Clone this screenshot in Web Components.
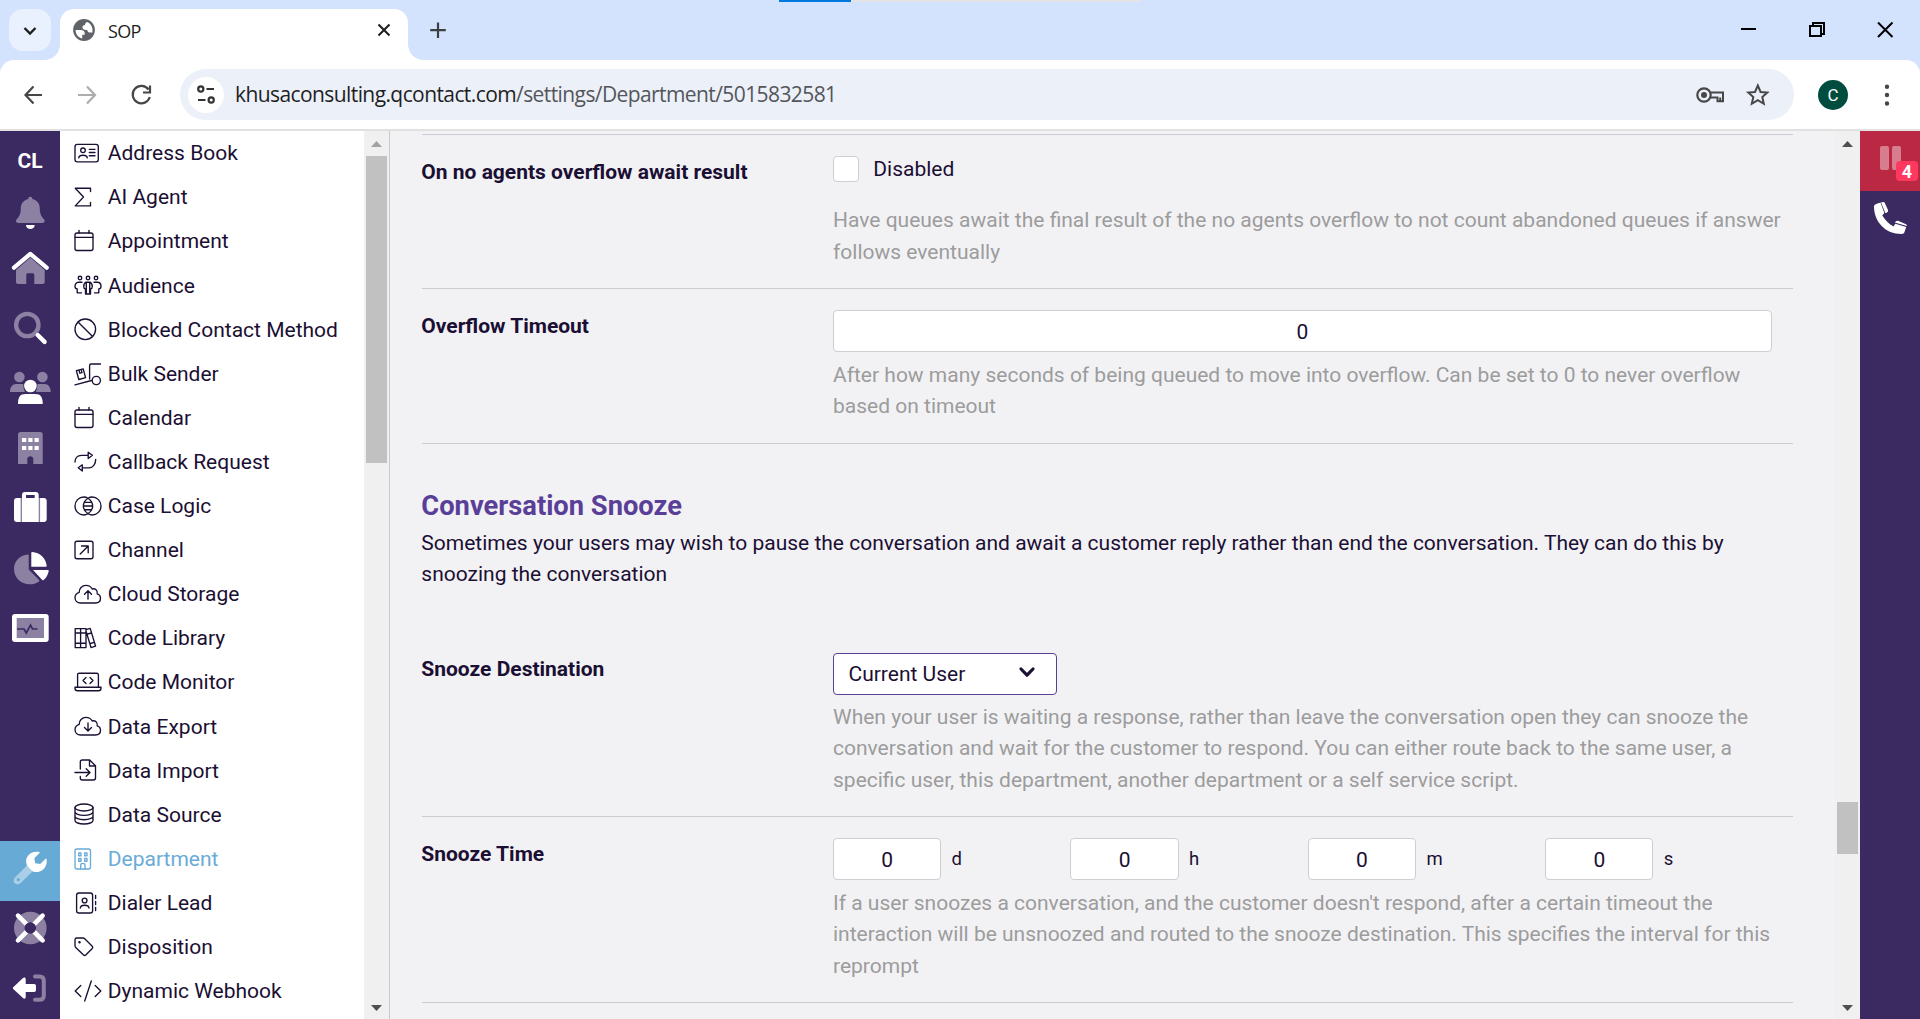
<!DOCTYPE html>
<html lang="en">
<head>
<meta charset="utf-8">
<title>SOP</title>
<style>
html,body{margin:0;height:100%;overflow:hidden}
body{font:21px/31.5px Roboto,sans-serif;color:#1b0f33}
</style>
</head>
<body>
<app-window></app-window>
<script>
const define=(name,html)=>customElements.define(name,class extends HTMLElement{
  constructor(){
    super();
    const t=document.createElement('template');
    t.innerHTML=typeof html==='function'?html(this):html;
    this.attachShadow({mode:'open'}).append(t.content.cloneNode(true));
  }
});

/* thin outline icons, drawn on a 28 x 24 grid */
const cal='<rect x="1" y="4" width="18" height="17.5" rx="2"/><path d="M1 8.3H19M5 4V1.3M15 4V1.3"/>';
const cloud='<path d="M6.5 21H21.500C24.500 21 26.500 19 26.500 16.300C26.500 14 25 12.300 23.200 11.800C24 8.500 21 6 18.200 7C16.800 4.600 14.500 3.400 12 3.400C8 3.400 5 6.600 5.200 10.300C2.600 11.200 1 13 1 15.600C1 18.700 3.400 21 6.500 21Z"/>';
const outline={
 address:'<rect x="1" y="3.300" width="23.300" height="17.600" rx="2.300"/><circle cx="9" cy="9.300" r="2.300"/><path d="M4.700 16.800C5 14.700 6.500 14.200 9 14.200S13 14.700 13.300 16.800M15.300 8.300H21M15.300 11.500H21M15.300 14.700H21"/>',
 sigma:'<path d="M16.500 6.500V3.200H1.300L9.500 12L1.300 20.900H16.500V17.500"/>',
 calendar:cal,
 audience:'<circle cx="6" cy="5" r="1.800"/><circle cx="14" cy="5" r="1.800"/><circle cx="22" cy="5" r="1.800"/><path d="M8 9.200H4.500C2 9.200 1 11.500 1 13.500C1 15 2 15.800 3.200 16V19.800H7.500M20 9.200H23.500C26 9.200 27 11.500 27 13.500C27 15 26 15.800 24.800 16V19.800H20.500M12 9.200H16C17.600 10 18.300 12 18.300 13.500C18.300 15.200 17.500 15.800 16.500 16V21H11.500V16C10.500 15.800 9.700 15.200 9.700 13.500C9.700 12 10.400 10 12 9.200ZM12.300 10V20M15.700 10V20"/>',
 blocked:'<circle cx="11.300" cy="12.300" r="10.300"/><path d="M4 5L18.600 19.600"/>',
 bulk:'<path d="M1 22.800L17.500 18.500M26.500 2H17.200C16 2 15.600 2.600 15.600 3.800V17"/><circle cx="22.300" cy="18.500" r="4.100"/><path d="M2.400 8.700L9.200 6.900L11.600 15.700L4.800 17.500ZM5 8.200L5.800 11.200L8 10.600L7.200 7.600"/>',
 callback:'<path d="M1 12C1 8 3.500 5.300 7.500 5.300H14M14.200 2.200L18.400 5.300L14.200 8.500ZM21.700 9.500C21.700 14 19 17.800 15 17.800H8.500M8.300 14.800L4.200 17.800L8.300 21Z"/>',
 logic:'<path d="M14 4.200C12.700 3.400 11.300 3 9.800 3C4.900 3 1 7 1 12S4.900 21 9.800 21C11.300 21 12.700 20.600 14 19.800C15.300 20.600 16.700 21 18.200 21C23 21 27 17 27 12S23 3 18.200 3C16.700 3 15.300 3.400 14 4.200C7.800 8.500 7.800 15.500 14 19.800C20.200 15.500 20.200 8.500 14 4.200ZM10.500 8.300H17.500M9.500 12H18.500M10.500 15.700H17.500"/>',
 channel:'<rect x="1" y="3.200" width="18" height="17.500" rx="2"/><path d="M6.200 16L14 8.200M7.500 8H14.200V14.800"/>',
 cloudup:cloud+'<path d="M14 17V9M10.500 12.300L14 8.800L17.500 12.300"/>',
 clouddown:cloud+'<path d="M14 9V16.700M10.500 13.500L14 17L17.500 13.500"/>',
 library:'<path d="M1.200 2.600H12V21.600H1.200ZM6.600 2.600V21.600M1.200 7H12M1.200 17.200H12M12 3.600L16.200 2.400L21.600 20.200L17 21.600L12 5M13.500 8L17.500 7M16.200 17.500L20.300 16.300"/>',
 monitor:'<path d="M3.600 17V4.800C3.600 3.700 4.200 3.200 5.300 3.200H22.700C23.800 3.200 24.400 3.700 24.400 4.800V17M1 17.200H27V18.200C27 19.800 26 20.700 24.500 20.700H3.500C2 20.700 1 19.800 1 18.200ZM12 7.500L9 10.500L12 13.500M16 7.500L19 10.500L16 13.500"/>',
 import:'<path d="M6.300 11V4C6.300 2.700 7 2 8.300 2H15.700L21.500 7.800V20C21.500 21.300 20.800 22 19.500 22H8.300C7 22 6.300 21.300 6.300 20V18.500M15.500 2V8H21.500M1 14.500H16M12.200 10.700L16 14.500L12.200 18.300"/>',
 source:'<ellipse cx="10" cy="5.500" rx="9" ry="3.500"/><path d="M1 5.500V18.500C1 20.500 5 22 10 22S19 20.500 19 18.500V5.500M1 9.800C1 11.800 5 13.300 10 13.300S19 11.800 19 9.800M1 14.200C1 16.200 5 17.700 10 17.700S19 16.200 19 14.200"/>',
 department:'<rect x="1" y="2" width="15.500" height="20" rx="2"/><path d="M4.700 6H7V8.700H4.700ZM10.700 6H13V8.700H10.700ZM4.700 11.500H7V14.200H4.700ZM10.700 11.500H13V14.200H10.700ZM6.700 22V18.200C6.700 15.800 11 15.800 11 18.200V22"/>',
 dialer:'<rect x="2.600" y="2" width="16" height="20" rx="2.300"/><circle cx="10.600" cy="9.500" r="2.400"/><path d="M6.300 17C6.500 14.600 8 14.200 10.600 14.200S14.800 14.600 15 17M21.600 4.300V7.500M21.600 10.300V13.500M21.600 16.300V19.500"/>',
 tag:'<path d="M1 4.800V10.500C1 11.500 1.300 12 2 12.700L9.300 19.700C10.300 20.700 11 20.700 12 19.700L18 13.700C19 12.700 19 12 18 11L11 4C10.300 3.300 9.800 3 8.800 3H2.800C1.500 3 1 3.500 1 4.800Z"/><circle cx="5.500" cy="7.300" r=".6"/>',
 code:'<path d="M6.800 6.500L1.200 12L6.800 17.500M21.200 6.500L26.800 12L21.200 17.500M17.300 2L10.700 22"/>'
};
define('menu-item',el=>`<style>
:host{display:flex;align-items:center;height:44.1px;padding-left:14px;white-space:nowrap;color:#1b0f33}
:host([active]){color:#6aabd8}
span{padding-top:2px}
svg{width:28px;height:24px;flex:none;margin-right:5.800px;fill:none;stroke:currentColor;stroke-width:1.35;stroke-linejoin:round;stroke-linecap:round}
</style><svg viewBox="0 0 28 24">${outline[el.getAttribute('icon')]}</svg><span><slot></slot></span>`);

/* two-tone rail icons on a 48 x 36 grid; class d is the dimmed layer */
const rail={
 bell:'<path class="d" d="M24.300 1.700C25.600 1.700 26.300 2.500 26.300 4C31 5 33.800 8.500 33.800 13.500C33.800 19 35.500 21.500 38 24.300C39.300 26 38.500 28 36.500 28H12.200C10.200 28 9.300 26 10.700 24.300C13.200 21.500 14.800 19 14.800 13.500C14.800 8.500 17.700 5 22.300 4C22.300 2.500 23 1.700 24.300 1.700Z"/><path d="M20 30H28.700C28.700 35.300 20 35.300 20 30Z"/>',
 home:'<path class="d" d="M24.300 7.500L38.700 20V32C38.700 33.300 38 34 36.700 34H28.300V25C28.300 23.800 27.600 23.200 26.500 23.200H22C20.800 23.200 20.300 23.800 20.300 25V34H12C10.700 34 10 33.300 10 32V20Z"/><path class="l" stroke-width="4.200" d="M8 17.700L24.300 3.900L40.700 17.700"/>',
 search:'<circle cx="21.300" cy="15" r="11.200" fill="none" stroke="#8c80a3" stroke-width="4.300"/><path class="l" stroke-width="4.400" d="M31.700 25L38.600 31.900"/>',
 users:'<circle class="d" cx="13.400" cy="7" r="5.300"/><circle class="d" cx="36.400" cy="7" r="5.300"/><path class="d" d="M4 22C4 17 6.500 14 10 14H16C17 14 17.500 14.300 17.500 16C17.500 18.500 18 20 19 22ZM44.700 22C44.700 17 42.200 14 38.700 14H32.700C31.700 14 31.200 14.300 31.200 16C31.200 18.500 30.700 20 29.700 22Z"/><circle cx="24.400" cy="16" r="6.300"/><path d="M12 34C12 27 14 24 19.500 24H29.200C34.700 24 36.700 27 36.700 34Z"/>',
 building:'<path class="d" d="M14.500 2H34.200C35.800 2 36.700 2.900 36.700 4.500V34H27.300V29C27.300 25.200 21.300 25.200 21.300 29V34H12V4.500C12 2.900 12.900 2 14.500 2Z"/><path d="M16 8H20.300V12H16ZM22.300 8H26.500V12H22.300ZM28.500 8H32.700V12H28.500ZM16 16H20.300V20H16ZM22.300 16H26.500V20H22.300ZM28.500 16H32.700V20H28.500Z"/>',
 suitcase:'<path class="d" d="M14 8H35V32H14Z"/><path d="M8 11C8 9 9 8 11 8H14.600V32H11C9 32 8 31 8 29ZM40.700 11C40.700 9 39.700 8 37.700 8H34.100V32H37.700C39.700 32 40.700 31 40.700 29Z"/><path fill-rule="evenodd" d="M16 32V5C16 3 17 2 19 2H29.700C31.700 2 32.700 3 32.700 5V32ZM20 5V8H28.700V5Z"/>',
 pie:'<path class="d" d="M22 4.500C22.600 4.400 22.700 4.800 22.700 5.300V19.500L33 30C33.500 30.500 33.500 31 33 31.400C23 38.500 8 32 8 19C8 11 14 5 22 4.500Z"/><path d="M25.300 2.800C25.300 2.200 25.600 2 26.200 2C34 2.400 40 8 40.700 16C40.700 16.500 40.400 16.800 39.900 16.800H25.300ZM27 20H42C42.600 20 42.800 20.300 42.700 20.900C42.200 24.500 40.300 27.600 37.600 30C37.200 30.500 36.700 30.400 36.300 30Z"/>',
 activity:'<rect x="6" y="4" width="36.700" height="28" rx="3"/><rect x="10.700" y="8" width="27.300" height="20" fill="#8c80a3"/><path d="M11 19H18L20.300 23L24.500 15L26.500 19H31.500" fill="none" stroke="#3b2a61" stroke-width="1.700"/>',
 wrench:'<path fill="#a9cfe8" fill-rule="evenodd" d="M21.500 15L9.400 27.100C7 29.500 7.300 32 8.800 33.200C10.500 34.800 13 34.800 15.200 32.600L27.500 20.500ZM12.300 28A1.600 1.600 0 1 1 12.200 28Z"/><path d="M33.500 3L28.300 8.200L29.200 13.200L34.200 14.100L39.400 8.900C40 8.400 40.400 8.600 40.600 9.300C41.300 14 39.400 18 36.200 20.300C33.500 22.300 29.700 22.700 26.500 21.200L21.400 16C19 11.500 20.200 6.800 23.700 4C26.300 1.900 29.700 1.200 33.200 1.900C33.900 2.100 34 2.500 33.500 3Z"/>',
 life:'<circle class="d" cx="24.300" cy="18" r="16.300"/><path class="l" stroke-width="4.600" stroke-linecap="butt" d="M12 5.700L36.600 30.300M36.600 5.700L12 30.300"/><circle cx="24.300" cy="18" r="5.800" fill="#3b2a61"/>',
 logout:'<path fill="none" stroke="#8c80a3" stroke-width="4" stroke-linecap="round" d="M29 6.500H33.500C36.500 6.500 37.800 8 37.800 10.500V25.700C37.800 28.300 36.500 29.700 33.500 29.700H29"/><path d="M7.500 16.900L17 8C18.300 6.800 19.700 7.500 19.700 9V14H28C29.300 14 30 14.700 30 16V20C30 21.300 29.300 22 28 22H19.700V27C19.700 28.600 18.300 29.300 17 28L7.500 19.200C6.700 18.400 6.700 17.600 7.500 16.900Z"/>'
};
define('rail-button',el=>`<style>
:host{display:flex;box-sizing:border-box;flex:none;height:60px;padding:9px 0 0 6px}
:host([active]){background:#68aad6}
:host([low]){padding-top:14px}
svg{width:48px;height:36px;fill:#fff}.d{fill:#8c80a3}.l{fill:none;stroke:#fff;stroke-linecap:round;stroke-linejoin:round}
</style><svg viewBox="0 0 48 36">${rail[el.getAttribute('icon')]}</svg>`);

define('side-rail',`<style>
:host{display:flex;flex-direction:column;width:60px;background:#3b2a61;flex:none;overflow:hidden}
b{height:50px;flex:none;line-height:60px;text-align:center;color:#fff;font-size:21px;font-weight:700}
div{flex:none;height:180px}
</style><b>CL</b>${['bell" low="','home','search','users','building','suitcase','pie','activity'].map(i=>`<rail-button icon="${i}"></rail-button>`).join('')}
<div></div><rail-button icon="wrench" active></rail-button><rail-button icon="life"></rail-button><rail-button icon="logout"></rail-button>`);

define('scroll-track',el=>`<style>
:host{display:flex;flex-direction:column;align-items:center;width:25px;flex:none;background:#f0f0f0;box-sizing:border-box;padding:10px 0 8px}
i{width:21px;height:${el.getAttribute('size')}px;margin-top:${el.getAttribute('offset')}px;background:#c1c1c1;margin-bottom:auto}
svg{width:11px;height:6px;flex:none}
</style><svg viewBox="0 0 11 6"><path d="M0 6L5.500 0L11 6Z" fill="${el.getAttribute('up')}"/></svg><i></i><svg viewBox="0 0 11 6"><path d="M0 0H11L5.500 6Z" fill="#505050"/></svg>`);

const items=[['address','Address Book'],['sigma','AI Agent'],['calendar','Appointment'],['audience','Audience'],['blocked','Blocked Contact Method'],['bulk','Bulk Sender'],['calendar','Calendar'],['callback','Callback Request'],['logic','Case Logic'],['channel','Channel'],['cloudup','Cloud Storage'],['library','Code Library'],['monitor','Code Monitor'],['clouddown','Data Export'],['import','Data Import'],['source','Data Source'],['department','Department'],['dialer','Dialer Lead'],['tag','Disposition'],['code','Dynamic Webhook']];
define('settings-menu',`<style>
:host{display:flex;width:329px;flex:none;background:#fff;border-right:1px solid #c9c9cf}
nav{width:304px;overflow:hidden}
</style><nav>${items.map(([i,t])=>`<menu-item icon="${i}"${i==='department'?' active':''}>${t}</menu-item>`).join('')}</nav>
<scroll-track up="#a3a3a3" offset="9" size="307"></scroll-track>`);

define('setting-row',`<style>
:host{display:flex;align-items:flex-start;border-bottom:1px solid #cbccd1;padding:21px 0 var(--end,20px);white-space:nowrap}
b{width:411.700px;margin-left:-.7px;flex:none;font-weight:700;line-height:31.500px;padding-top:1px}
section{display:flex;flex-direction:column;align-items:flex-start;width:939px}
p{margin:var(--gap,8px) 0 0;color:#9c9c9c}
:host([toggle]) p{margin-top:23px}
</style><b><slot name="label"></slot></b><section><slot></slot><p><slot name="help"></slot></p></section>`);

define('text-box',`<style>
:host{display:block;box-sizing:border-box;width:100%;height:42px;border:1px solid #cdced3;border-radius:4px;background:#fff;text-align:center;line-height:42px}
</style><slot></slot>`);
define('check-box',`<style>
:host{display:flex;align-items:center;height:26px;line-height:28px}
i{width:24px;height:24px;border:1px solid #cdced3;border-radius:4px;background:#fff;margin-right:14.300px}
</style><i></i><slot></slot>`);
define('select-box',`<style>
:host{display:flex;box-sizing:border-box;align-items:center;justify-content:space-between;width:224px;height:42px;border:1px solid #5a3f98;border-radius:4px;background:#fff;padding:1px 20px 0 14.500px}
svg{width:18px;height:13px;margin-top:-3px}
</style><slot></slot><svg viewBox="0 0 18 13"><path d="M3 3L9 9.200L15 3" fill="none" stroke="#1b0f33" stroke-width="3.200" stroke-linecap="round" stroke-linejoin="round"/></svg>`);
define('duration-input',`<style>
:host{display:flex}
div{display:flex;align-items:center;width:237.400px;gap:10.300px;font-size:18.500px}
text-box{width:108.300px;font-size:21px}
span{padding-top:1px}
</style>${['d','h','m','s'].map(u=>`<div><text-box>0</text-box><span>${u}</span></div>`).join('')}`);

define('settings-page',`<style>
:host{display:flex;flex:1;background:#f2f2f5}
main{flex:1;padding:3px 42px 0 32px;overflow:hidden}
hr{height:1px;border:0;margin:0;background:#cbccd1}
h2{margin:43px 0 0 -.7px;font-size:27.300px;line-height:38px;color:#5a3f98;font-weight:700}
main>p{margin:2.800px 0 41.200px -.7px;white-space:nowrap}
</style><main><hr>
<setting-row toggle><span slot="label">On no agents overflow await result</span><check-box>Disabled</check-box><span slot="help">Have queues await the final result of the no agents overflow to not count abandoned queues if answer<br>follows eventually</span></setting-row>
<setting-row style="--gap:7.8px;--end:20.2px"><span slot="label">Overflow Timeout</span><text-box>0</text-box><span slot="help">After how many seconds of being queued to move into overflow. Can be set to 0 to never overflow<br>based on timeout</span></setting-row>
<h2>Conversation Snooze</h2>
<p>Sometimes your users may wish to pause the conversation and await a customer reply rather than end the conversation. They can do this by<br>snoozing the conversation</p>
<setting-row style="--gap:6.8px;--end:19.7px"><span slot="label">Snooze Destination</span><select-box>Current User</select-box><span slot="help">When your user is waiting a response, rather than leave the conversation open they can snooze the<br>conversation and wait for the customer to respond. You can either route back to the same user, a<br>specific user, this department, another department or a self service script.</span></setting-row>
<setting-row style="--gap:7.8px;--end:19.7px"><span slot="label">Snooze Time</span><duration-input></duration-input><span slot="help">If a user snoozes a conversation, and the customer doesn't respond, after a certain timeout the<br>interaction will be unsnoozed and routed to the snooze destination. This specifies the interval for this<br>reprompt</span></setting-row>
</main><scroll-track up="#505050" offset="655" size="52"></scroll-track>`);

define('call-rail',`<style>
:host{display:flex;flex-direction:column;width:60px;flex:none;background:#3b2a61}
div{position:relative;height:60px;background:#bb2843}
svg{display:block}
b{position:absolute;left:36px;top:30px;width:22px;height:20px;border-radius:4px;background:#ff3860;color:#fff;font-size:18px;line-height:21px;text-align:center}
</style><div><svg width="60" height="60"><path d="M20 17Q20 15 22 15H27Q29 15 29 17V37Q29 39 27 39H22Q20 39 20 37ZM32 17Q32 15 34 15H39Q41 15 41 17V37Q41 39 39 39H34Q32 39 32 37Z" fill="#d67e8e"/></svg><b>4</b></div>
<svg width="60" height="60" fill="#fff"><path d="M20.500 11.500C17 12.500 14 13.500 14 15.500C14 31 25.500 43 41.500 43C43.700 43 44.500 42 45 39.500L46.200 36L35.300 32.700L33.500 35.500C29 33 25.500 29.500 22.300 24.500L24.300 22Z"/><path d="M21 11.400L23 11C24 10.900 24.500 11.200 24.800 12L28 19C28.300 20 28 20.500 27.300 21.200L25.400 22.300ZM34.800 31.500L36 30.200C36.600 29.600 37.200 29.500 38 29.800L45.500 33C46.700 33.500 47 34 46.800 34.900Z"/></svg>`);

define('tab-strip',`<style>
:host{display:flex;height:60px;background:#d3e2fd;position:relative;font-family:"Open Sans",sans-serif}
.list{width:42px;height:42px;margin:9px 9px 0 9px;background:#e9f0fe;border-radius:14px}
.tab{display:flex;align-items:center;box-sizing:border-box;width:348px;height:51px;margin-top:9px;padding:0 17px 9px 13px;border-radius:14px 14px 0 0;background:#fff;position:relative;font-size:18px;color:#1f1f1f}
.tab::before,.tab::after{content:"";position:absolute;bottom:0;width:15px;height:15px}
.tab::before{left:-15px;background:radial-gradient(circle at 0 0,transparent 14.500px,#fff 15px)}
.tab::after{right:-15px;background:radial-gradient(circle at 100% 0,transparent 14.500px,#fff 15px)}
.tab span{flex:1;margin-left:13px;letter-spacing:-.7px;padding-top:4px}
.plus{margin:20px 0 0 20px}
.win{margin:14px 26px 0 auto}
.load{position:absolute;left:779px;top:0;width:362px;height:2px;background:linear-gradient(90deg,#0078dd 72px,#e4e4e6 72px)}
svg{display:block;fill:none;stroke:#1f1f1f}
</style><div class="list"><svg width="42" height="42"><path d="M15.500 19L21 24.500L26.500 19" stroke-width="2.400"/></svg></div>
<div class="tab"><svg width="22" height="22" viewBox="0 0 22 22"><circle cx="11" cy="11" r="10.900" fill="#5f6368" stroke="none"/><path d="M2.600 11H7.500C10 11 11.700 12.300 11.700 14V15.700H9.200V19.400C5 18.500 2.500 15 2.600 11ZM14 3C17.500 4.300 19.500 7.500 19.500 11V13.500H16.500C15 13.500 14.500 12.300 14.300 11C12 11 9.500 10.500 9.500 8.500C9.500 6.600 10.500 6.100 12 6C12 4.500 12.700 3.500 14 3Z" fill="#fff" stroke="none"/></svg><span>SOP</span><svg width="14" height="14"><path d="M1.500 1.500L12.500 12.500M12.500 1.500L1.500 12.500" stroke-width="2.100"/></svg></div>
<svg class="plus" width="20" height="20"><path d="M10 2.500V18M2.200 10.200H17.800" stroke-width="2.200" stroke="#3c4043"/></svg>
<svg class="win" width="154" height="32"><path d="M1 15H16" stroke="#000" stroke-width="2"/><path d="M70 12H81V22H70ZM73 11.500V9H84V20H81.500" stroke="#000" stroke-width="2"/><path d="M138 8.500L152.500 23M152.500 8.500L138 23" stroke="#000" stroke-width="2"/></svg><div class="load"></div>`);

define('address-bar',`<style>
:host{display:flex;height:69px;background:#d3e2fd;border-bottom:2px solid #e1e1e1}
header{display:flex;flex:1;align-items:center;background:#fff;border-radius:14px 14px 0 0;padding:0 24px 0 22px}
svg{display:block;flex:none;fill:none;stroke:#474747;stroke-width:2.200}
.omni{display:flex;align-items:center;box-sizing:border-box;width:1614px;height:51px;margin-left:26px;border-radius:26px;background:#ecf0f9;padding:0 23px 0 8px;font:21px "Open Sans",sans-serif;color:#1f1f1f}
.site{width:36px;height:36px;border-radius:50%;background:#fff;margin-right:11px}
.omni span{flex:1;white-space:nowrap;letter-spacing:-.59px;padding-bottom:2px}em{font-style:normal;color:#54565a}
.me{width:30px;height:30px;border-radius:50%;background:#004d40;color:#fff;font:17px/30px Roboto,sans-serif;text-align:center;margin:0 36px 0 24px}
</style><header><svg width="132" height="24"><path d="M20 12H4M11.500 3.500L3.500 12L11.500 20.500"/><path d="M56 12H72.500M65 3.500L73 12L65 20.500" stroke="#adadad"/><path d="M126.500 6.500A8.700 8.700 0 1 0 127.800 14M128 2.500V9.500H121"/></svg>
<div class="omni"><div class="site"><svg width="36" height="36"><path d="M18.500 12H26M10 23H17.500" stroke="#333"/><circle cx="12.800" cy="12" r="2.600" stroke="#333"/><circle cx="23.200" cy="23" r="2.600" stroke="#333"/></svg></div>
<span>khusaconsulting.qcontact.com<em>/settings/Department/5015832581</em></span>
<svg width="76" height="26"><circle cx="9" cy="13" r="6.700"/><circle cx="9" cy="13" r="3" fill="#474747" stroke="none"/><path d="M15 10.500H28V19.300H22.500V15.500H15M25.200 15.500V19" stroke-width="2"/><path d="M62.800 3.500L65.600 10L72.300 10.600L67.300 15L68.800 21.800L62.800 18.200L56.800 21.800L58.300 15L53.300 10.600L60 10Z" stroke-width="2"/></svg></div>
<div class="me">C</div><svg width="6" height="24"><path d="M3 3.700V3.710M3 12V12.010M3 20.500V20.510" stroke-width="4.400" stroke-linecap="round"/></svg></header>`);

define('app-window',`<style>
:host{display:flex;flex-direction:column;width:1920px;height:1019px;overflow:hidden}
.page{display:flex;height:888px;flex:none}
</style><tab-strip></tab-strip><address-bar></address-bar><div class="page"><side-rail></side-rail><settings-menu></settings-menu><settings-page></settings-page><call-rail></call-rail></div>`);
</script>
</body>
</html>
